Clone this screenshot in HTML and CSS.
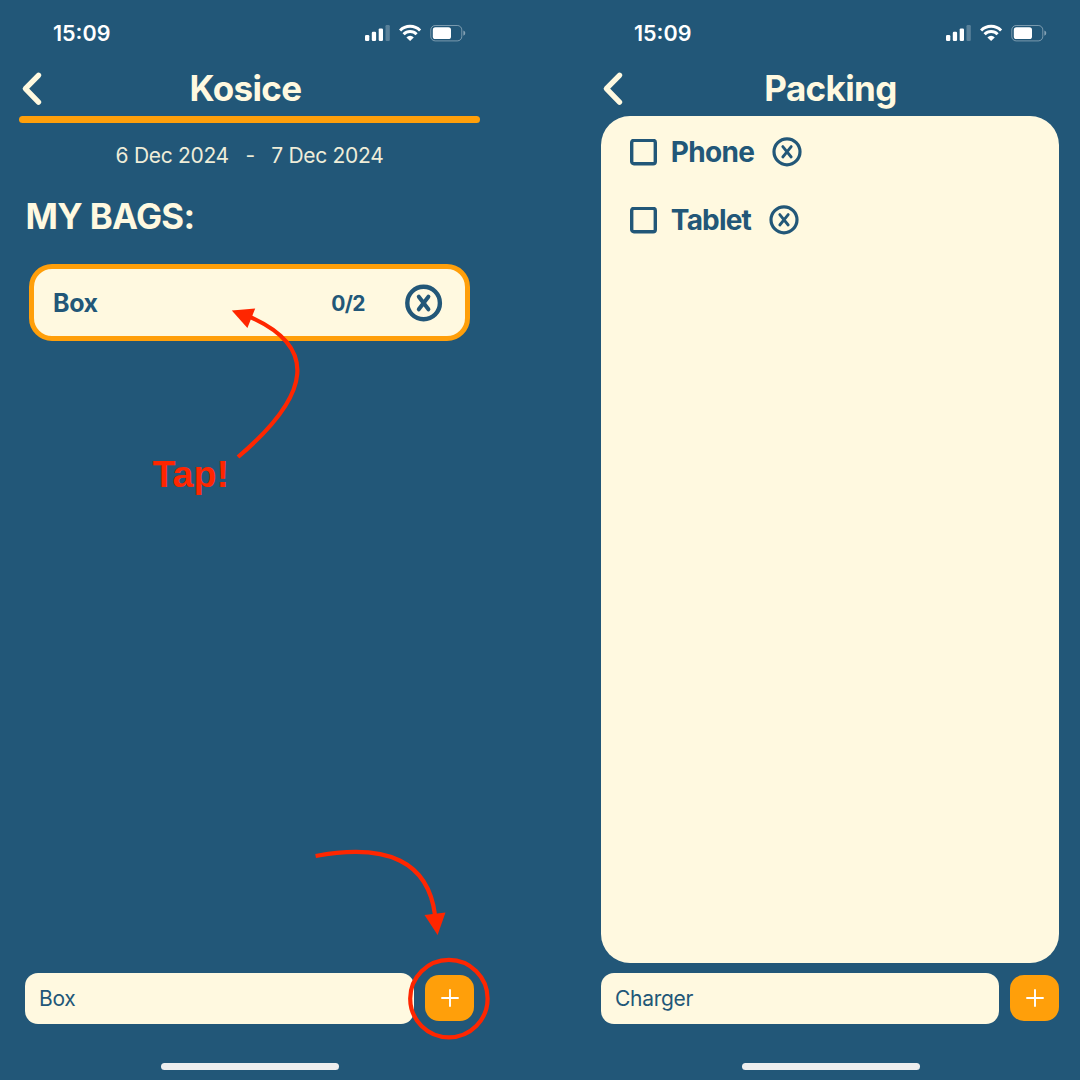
FILE: index.html
```html
<!DOCTYPE html>
<html lang="en">
<head>
<meta charset="utf-8">
<title>Packing</title>
<link rel="stylesheet" href="styles.css">
</head>
<body>
<svg class="defs" width="0" height="0" aria-hidden="true">
  <symbol id="status" viewBox="0 0 102 18">
    <g fill="#fff">
      <rect x="0" y="11" width="4.3" height="6" rx="1.2"/>
      <rect x="6.8" y="7.8" width="4.3" height="9.2" rx="1.2"/>
      <rect x="13.7" y="4.4" width="4.3" height="12.6" rx="1.2"/>
      <rect x="20.5" y="1" width="4.3" height="16" rx="1.2" opacity=".25"/>
      <path d="M45.1 17 L41.4 13.4 A5.2 5.2 0 0 1 48.8 13.4 Z"/>
    </g>
    <g fill="none" stroke="#fff" stroke-width="3">
      <path d="M35.1 6.5 A14.1 14.1 0 0 1 55.1 6.5"/>
      <path d="M38.6 10.3 A9.2 9.2 0 0 1 51.6 10.3"/>
    </g>
    <rect x="65.8" y="1.5" width="31" height="15.4" rx="4.4" fill="none" stroke="#fff" stroke-opacity=".4"/>
    <path d="M98.4 6.4 Q100.3 7 100.3 9.1 Q100.3 11.2 98.4 11.8 Z" fill="#fff" opacity=".45"/>
    <rect x="67.8" y="3.3" width="18.2" height="11.8" rx="2.6" fill="#fff"/>
  </symbol>
  <symbol id="back" viewBox="0 0 24 36">
    <path d="M18.5 4.3 L5.4 17.7 L18.5 31.1" fill="none" stroke="#fff9e0" stroke-width="5.4" stroke-linecap="round" stroke-linejoin="round"/>
  </symbol>
  <symbol id="plus" viewBox="0 0 18 18">
    <path d="M9 1 V17 M1 9 H17" fill="none" stroke="#fff" stroke-width="1.9" stroke-linecap="round"/>
  </symbol>
  <symbol id="check" viewBox="0 0 27 27">
    <rect x="1.7" y="1.4" width="23.6" height="23.3" rx="2.2" fill="none" stroke="#225778" stroke-width="3.4"/>
  </symbol>
</svg>
<main class="screens">
  <section class="phone">
    <div class="status"><span class="time">15:09</span><svg class="status-icons"><use href="#status"/></svg></div>
    <header class="header"><svg class="back"><use href="#back"/></svg><h1 class="title title-trip">Kosice</h1></header>
    <div class="rule"></div>
    <div class="dates"><span>6 Dec 2024</span><span>-</span><span>7 Dec 2024</span></div>
    <h2 class="heading">MY BAGS:</h2>
    <div class="bag">
      <span class="bag-name">Box</span>
      <span class="bag-count">0/2</span>
      <svg class="bag-remove" viewBox="0 0 38 38" fill="none" stroke="#225778" stroke-linecap="round"><circle cx="18.6" cy="19" r="16.3" stroke-width="4.4"/><path d="M13.8 12.7 L23.4 25.3 M23.4 12.7 L13.8 25.3" stroke-width="4"/></svg>
    </div>
    <div class="spacer"></div>
    <div class="entry entry-bag"><div class="field">Box</div><div class="add"><svg class="plus"><use href="#plus"/></svg></div></div>
    <div class="home"></div>
    <span class="tap">Tap!</span>
    <svg class="marks" viewBox="0 0 499 1080" fill="none" stroke="#ff2600" stroke-width="4.2">
      <path d="M238 457 Q351 361 249 316.5"/>
      <path d="M231.8 310.5 L255.2 308.5 L247.4 328 Z" fill="#ff2600" stroke="none"/>
      <path d="M315.6 856 Q425 836 435 915"/>
      <path d="M424.5 915 L445.5 912.5 L437.6 935 Z" fill="#ff2600" stroke="none"/>
      <circle cx="448.9" cy="998.6" r="38.7"/>
    </svg>
  </section>
  <section class="phone">
    <div class="status"><span class="time">15:09</span><svg class="status-icons"><use href="#status"/></svg></div>
    <header class="header"><svg class="back"><use href="#back"/></svg><h1 class="title">Packing</h1></header>
    <div class="list">
      <div class="item"><svg class="check"><use href="#check"/></svg><span class="item-name">Phone</span>
        <svg class="item-remove" viewBox="0 0 30 30" fill="none" stroke="#225778" stroke-linecap="round"><circle cx="15" cy="14.8" r="13" stroke-width="3.2"/><path d="M10.8 9.6 L19.2 20 M19.2 9.6 L10.8 20" stroke-width="2.8"/></svg></div>
      <div class="item"><svg class="check"><use href="#check"/></svg><span class="item-name item-name-tight">Tablet</span>
        <svg class="item-remove" viewBox="0 0 30 30" fill="none" stroke="#225778" stroke-linecap="round"><circle cx="15" cy="14.8" r="13" stroke-width="3.2"/><path d="M10.8 9.6 L19.2 20 M19.2 9.6 L10.8 20" stroke-width="2.8"/></svg></div>
    </div>
    <div class="entry entry-item"><div class="field">Charger</div><div class="add"><svg class="plus"><use href="#plus"/></svg></div></div>
    <div class="home"></div>
  </section>
</main>
</body>
</html>
```
FILE: styles.css
```css
* { box-sizing: border-box; }
body { margin: 0; background: #225778; font-family: Inter, "Liberation Sans", sans-serif; color: #fff9e0; }
svg { display: block; flex: none; }
.defs { position: absolute; }
.screens { display: flex; gap: 82px; width: 1080px; height: 1080px; overflow: hidden; }
.phone { position: relative; flex: none; display: flex; flex-direction: column; width: 499px; height: 1080px; }

.status { display: flex; align-items: center; justify-content: space-between; height: 66px; padding: 0 32px 0 53px; color: #fff; }
.time { font-size: 21.5px; font-weight: 600; line-height: 26px; }
.status-icons { width: 102px; height: 18px; }

.header { display: grid; grid-template-columns: 24px 1fr 24px; align-items: center; height: 45px; padding: 0 20px; }
.back { width: 24px; height: 36px; }
.title { margin: 0; padding-bottom: 2px; text-align: center; font-size: 35px; font-weight: 700; line-height: 42px; letter-spacing: -0.65px; }
.title-trip { padding-right: 8px; }

.rule { height: 7px; margin: 5px 19px 0; border-radius: 4px; background: #ff9f0a; }
.dates { display: flex; justify-content: center; gap: 16.5px; height: 26px; margin-top: 20px; font-size: 21px; font-weight: 400; line-height: 26px; letter-spacing: -0.3px; opacity: .93; }
.heading { margin: 25px 0 0 25.5px; font-size: 34.8px; font-weight: 700; line-height: 44px; letter-spacing: -0.65px; }

.bag { display: flex; align-items: center; height: 77px; margin: 26px 29px 0; padding: 0 22px 0 19px; border: 5px solid #ff9f0a; border-radius: 23px; background: #fff9e0; color: #225778; }
.bag-name { flex: 1; font-size: 25px; font-weight: 700; line-height: 30px; letter-spacing: -0.4px; }
.bag-count { margin-right: 40px; padding-top: 1px; font-size: 21px; font-weight: 700; letter-spacing: -0.6px; }
.bag-remove { width: 38px; height: 38px; }
.spacer { flex: 1; }

.entry { display: flex; align-items: center; gap: 11px; height: 51px; }
.entry-bag { margin: 0 25px; }
.entry-item { margin: 10px 21px 0 20px; }
.field { flex: 1; height: 51px; padding-left: 14px; border-radius: 13px; background: #fff9e0; color: #225778; font-size: 21px; font-weight: 400; line-height: 51px; letter-spacing: -0.3px; }
.add { display: flex; align-items: center; justify-content: center; width: 49px; height: 46px; margin-bottom: 1px; border-radius: 14px; background: #ff9f0a; }
.plus { width: 18px; height: 18px; }
.home { flex: none; align-self: center; width: 178px; height: 7px; margin: 39px 0 10px; border-radius: 4px; background: #eee; }

.list { flex: 1; margin: 5px 21px 0 20px; padding: 2px 0 0 29px; border-radius: 29px; background: #fff9e0; color: #225778; }
.item { display: flex; align-items: center; height: 68px; }
.check { width: 27px; height: 27px; }
.item-name { margin: 0 18px 0 13.8px; font-size: 28px; font-weight: 700; line-height: 34px; letter-spacing: -0.7px; }
.item-name-tight { letter-spacing: -0.8px; }
.item-remove { width: 30px; height: 30px; }

.tap { position: absolute; left: 152.5px; top: 452px; color: #ff2600; font: 700 37.5px/44px "Liberation Sans", Arial, sans-serif; }
.marks { position: absolute; inset: 0; width: 499px; height: 1080px; pointer-events: none; }
```
